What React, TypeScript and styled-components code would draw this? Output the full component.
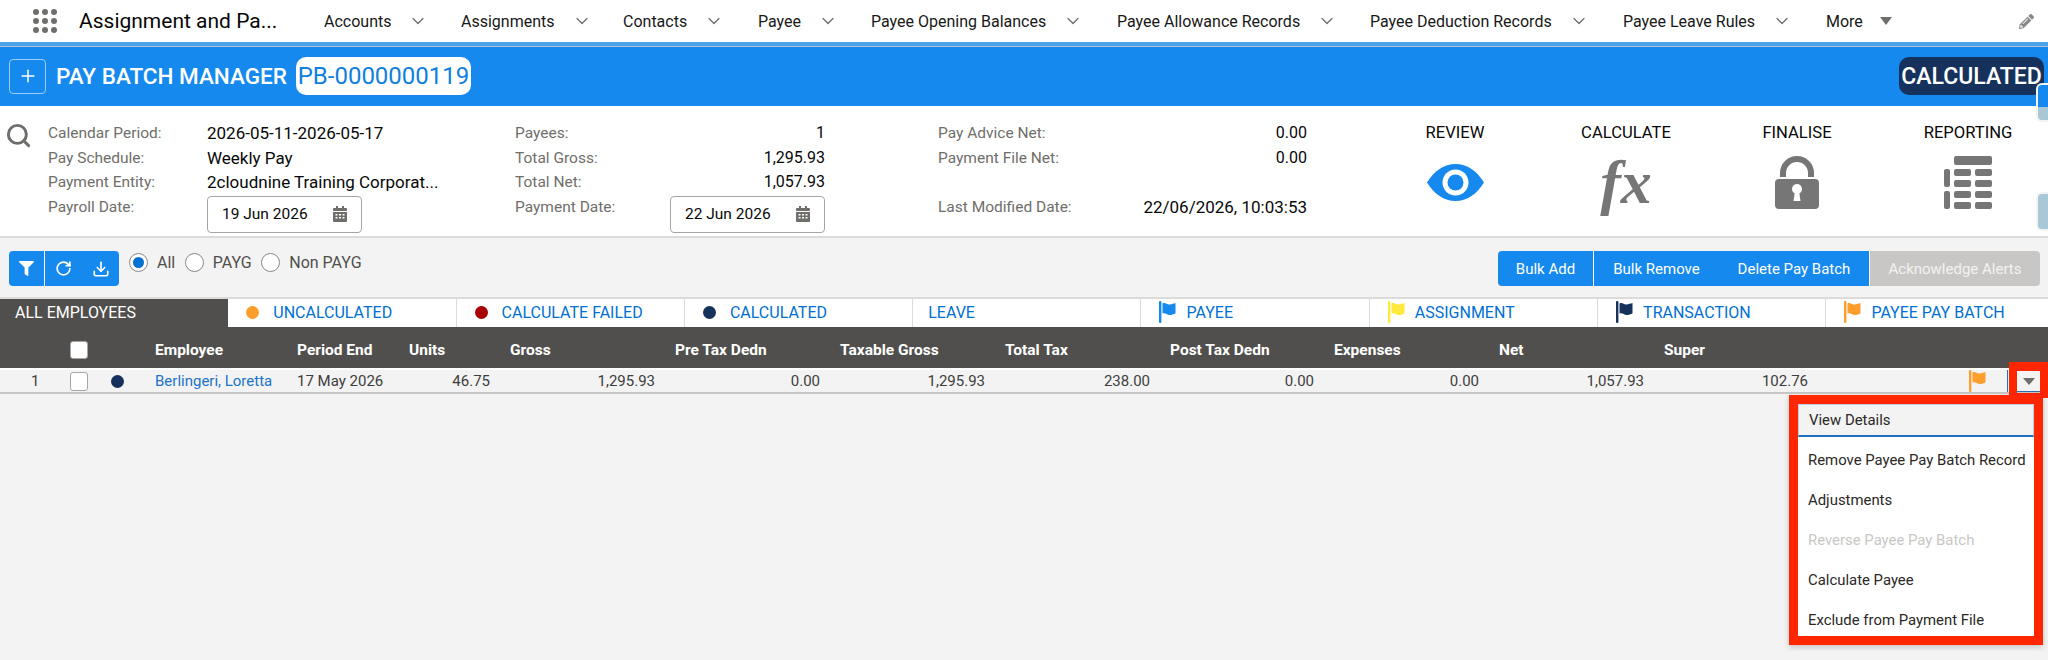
import styled, { createGlobalStyle } from "styled-components";
import { ChevronDown, Download, Plus, RotateCw, Search } from "lucide-react";
import { FaFilter, FaPencilAlt } from "react-icons/fa";

const GlobalStyle = createGlobalStyle`
  html, body {
    margin: 0;
    padding: 0;
    background: #f3f3f3;
  }
  * {
    box-sizing: border-box;
  }
`;

const Page = styled.div`
  position: relative;
  width: 2048px;
  height: 660px;
  overflow: hidden;
  background: #f3f3f3;
  font-family: Roboto, "Liberation Sans", sans-serif;
  color: #080707;
`;

const TopNav = styled.div`
  display: flex;
  align-items: center;
  height: 42px;
  padding-left: 33px;
  background: #fff;
`;

const AppGrid = styled.div`
  display: grid;
  grid-template-columns: repeat(3, 6px);
  gap: 3px;
  width: 46px;
`;

const AppDot = styled.span`
  width: 6px;
  height: 6px;
  border-radius: 50%;
  background: #706e6b;
`;

const AppName = styled.div`
  width: 245px;
  font-size: 21px;
  white-space: nowrap;
`;

const NavList = styled.div`
  display: grid;
  grid-template-columns: 137px 162px 135px 113px 246px 253px 253px 203px 193px auto;
  align-items: center;
`;

const NavItem = styled.div`
  display: flex;
  align-items: center;
  gap: 17px;
  font-size: 16px;
  color: #181818;
  white-space: nowrap;
`;

const MoreCaret = styled.span`
  width: 0;
  height: 0;
  border-left: 6px solid transparent;
  border-right: 6px solid transparent;
  border-top: 8px solid #706e6b;
`;

const AccentLine = styled.div`
  height: 5px;
  background: #4da3ea;
  border-bottom: 1px solid #b9c3cb;
`;

const Banner = styled.div`
  display: flex;
  align-items: center;
  height: 59px;
  padding: 0 4px 1px 9px;
  background: #1589ee;
  color: #fff;
`;

const AddButton = styled.div`
  display: flex;
  align-items: center;
  justify-content: center;
  width: 37px;
  height: 35px;
  border: 1px solid #9fcdf5;
  border-radius: 4px;
`;

const BannerTitle = styled.div`
  margin-left: 10px;
  font-size: 22.5px;
  font-weight: 500;
  white-space: nowrap;
`;

const BatchChip = styled.div`
  display: flex;
  align-items: center;
  justify-content: center;
  width: 175px;
  height: 38px;
  margin-left: 9px;
  border-radius: 10px;
  background: #fff;
  color: #0f7fe0;
  font-size: 24px;
`;

const StatusChip = styled.div`
  display: flex;
  align-items: center;
  justify-content: center;
  width: 145px;
  height: 38px;
  margin-left: auto;
  border-radius: 10px;
  background: #16325c;
  font-size: 23px;
  font-weight: 500;
`;

const Details = styled.div`
  display: grid;
  grid-template-columns: 48px 467px 423px 431.5px repeat(4, 171px);
  height: 132px;
  padding-top: 15px;
  background: #fff;
  border-bottom: 2px solid #dddbda;
`;

const SearchSlot = styled.div`
  padding: 1px 0 0 5px;
  color: #706e6b;
`;

const InfoGrid = styled.div<{ $label: number; $value: number; $right?: boolean }>`
  display: grid;
  grid-template-columns: ${(p) => p.$label}px ${(p) => p.$value}px;
  grid-auto-rows: 24.6px;
  align-items: center;
  font-size: 15.5px;
  line-height: 24px;

  & > *:nth-child(even) {
    text-align: ${(p) => (p.$right ? "right" : "left")};
  }
`;

const InfoLabel = styled.div`
  color: #706e6b;
  white-space: nowrap;
`;

const InfoValue = styled.div<{ $amount?: boolean }>`
  font-size: ${(p) => (p.$amount ? 16 : 17)}px;
  white-space: nowrap;
`;

const DateBox = styled.div`
  display: flex;
  align-items: center;
  justify-content: space-between;
  align-self: start;
  width: 155px;
  height: 37px;
  margin-top: 1px;
  padding: 0 14px;
  background: #fff;
  border: 1px solid #a8a6a4;
  border-radius: 4px;
  text-align: left;
`;

const ActionColumn = styled.div`
  display: flex;
  flex-direction: column;
  align-items: center;
  font-size: 16.6px;
  line-height: 24px;
`;

const ActionIcon = styled.div`
  display: flex;
  align-items: center;
  justify-content: center;
  height: 54px;
  margin-top: 10px;
`;

const FxGlyph = styled.span`
  font-family: "Liberation Serif", serif;
  font-style: italic;
  font-weight: 700;
  font-size: 62px;
  line-height: 54px;
  color: #767676;
`;

const Toolbar = styled.div`
  display: flex;
  justify-content: space-between;
  height: 59px;
  padding: 13px 8px 0 9px;
`;

const ToolbarLeft = styled.div`
  display: flex;
  align-items: flex-start;
`;

const IconGroup = styled.div`
  display: flex;
  align-items: center;
  width: 110px;
  height: 35px;
  border-radius: 4px;
  background: #1589ee;
  color: #fff;
`;

const IconCell = styled.div<{ $width: number; $divider?: boolean }>`
  display: flex;
  align-items: center;
  justify-content: center;
  width: ${(p) => p.$width}px;
  height: 100%;
  border-right: ${(p) => (p.$divider ? "1px solid #fff" : "none")};
`;

const RadioRow = styled.div`
  display: flex;
  align-items: center;
  gap: 9.5px;
  margin: 2px 0 0 10px;
  font-size: 16px;
  color: #514f4d;
`;

const RadioOption = styled.label`
  display: flex;
  align-items: center;
  gap: 9px;
`;

const RadioDot = styled.span<{ $on?: boolean }>`
  display: flex;
  align-items: center;
  justify-content: center;
  width: 19px;
  height: 19px;
  border: 1px solid #8a8886;
  border-radius: 50%;
  background: #fff;

  &::after {
    content: "";
    display: ${(p) => (p.$on ? "block" : "none")};
    width: 11px;
    height: 11px;
    border-radius: 50%;
    background: #0070d2;
  }
`;

const ActionGroup = styled.div`
  display: flex;
  height: 35px;
  border-radius: 4px;
  overflow: hidden;
  font-size: 15px;
`;

const GroupButton = styled.div<{ $width: number; $muted?: boolean; $divider?: boolean }>`
  display: flex;
  align-items: center;
  justify-content: center;
  width: ${(p) => p.$width}px;
  background: ${(p) => (p.$muted ? "#c9c7c5" : "#1589ee")};
  color: ${(p) => (p.$muted ? "#f3f2f2" : "#fff")};
  border-right: ${(p) => (p.$divider ? "1px solid #fff" : "none")};
  white-space: nowrap;
`;

const TabBar = styled.div`
  display: flex;
  height: 30px;
  border-top: 2px solid #dddbda;
  background: #fff;
`;

const Tab = styled.div<{ $active?: boolean }>`
  display: flex;
  flex: 0 0 228.3px;
  align-items: center;
  padding: 0 0 2px 15px;
  background: ${(p) => (p.$active ? "#514f4d" : "#fff")};
  color: ${(p) => (p.$active ? "#fff" : "#0070d2")};
  border-right: ${(p) => (p.$active ? "none" : "1px solid #dddbda")};
  font-size: 16px;
  white-space: nowrap;
`;

const TabIcon = styled.span`
  display: flex;
  justify-content: flex-start;
  width: 30px;
  padding-left: 3px;
`;

const StatusDot = styled.span<{ $color: string; $size: number; $indent?: number }>`
  display: block;
  width: ${(p) => p.$size}px;
  height: ${(p) => p.$size}px;
  margin-left: ${(p) => p.$indent ?? 0}px;
  border-radius: 50%;
  background: ${(p) => p.$color};
`;

const columns = "70px 26px 51px 142px 112px 101px 165px 165px 165px 165px 164px 165px 165px 164px 188px 40px";

const HeaderRow = styled.div`
  display: grid;
  grid-template-columns: ${columns};
  align-items: center;
  height: 41px;
  padding-top: 5px;
  background: #514f4d;
  color: #fff;
  font-size: 15.5px;
  font-weight: 700;
`;

const DataRow = styled.div`
  display: grid;
  grid-template-columns: ${columns};
  align-items: center;
  height: 26px;
  border-top: 2px solid #fff;
  border-bottom: 2px solid #c9c7c5;
  background: #f3f3f3;
  color: #3e3e3c;
  font-size: 15px;
`;

const HeaderCell = styled.div`
  padding-left: 8px;
  white-space: nowrap;
`;

const RowNumber = styled.div`
  padding-left: 31px;
`;

const Cell = styled.div<{ $align?: "left" | "right" }>`
  padding: 0 12px 0 8px;
  text-align: ${(p) => p.$align ?? "left"};
  white-space: nowrap;
`;

const NameLink = styled.span`
  color: #1b74c9;
`;

const Box = styled.span<{ $height: number }>`
  display: block;
  width: 18px;
  height: ${(p) => p.$height}px;
  border: 1px solid #a8a6a4;
  border-radius: 3px;
  background: #fff;
`;

const FlagCell = styled.div`
  display: flex;
  align-items: center;
  align-self: stretch;
  justify-content: flex-end;
  padding-right: 20px;
  border-right: 1px solid #2a6fb5;
`;

const RowToggle = styled.div`
  display: flex;
  align-items: center;
  justify-content: center;
  height: 22px;
  margin-left: 9px;
  width: 23px;
  background: #f3f3f3;
  border-top: 1px solid #2a6fb5;
  border-bottom: 1px solid #2a6fb5;

  &::after {
    content: "";
    border-left: 6px solid transparent;
    border-right: 6px solid transparent;
    border-top: 7px solid #706e6b;
  }
`;

const CalloutBox = styled.div`
  position: absolute;
  top: 362px;
  left: 2009px;
  width: 39px;
  height: 36px;
  border: solid #ff2600;
  border-width: 9px 8px 5px 8px;
  pointer-events: none;
`;

const RowMenu = styled.div`
  position: absolute;
  top: 395px;
  left: 1789px;
  width: 254px;
  height: 250px;
  overflow: hidden;
  background: #fff;
  border: 9px solid #ff2600;
  box-shadow: 0 2px 6px rgba(0, 0, 0, 0.2);
  font-size: 14.9px;
  color: #2b2826;
`;

const MenuItem = styled.div<{ $active?: boolean; $disabled?: boolean }>`
  display: flex;
  align-items: center;
  height: ${(p) => (p.$active ? 33 : 40)}px;
  margin-bottom: ${(p) => (p.$active ? 3 : 0)}px;
  padding-left: 10px;
  background: ${(p) => (p.$active ? "#f3f3f3" : "#fff")};
  border: ${(p) => (p.$active ? "1px solid #b9cfe4" : "none")};
  border-bottom: ${(p) => (p.$active ? "2px solid #1b6ec2" : "none")};
  color: ${(p) => (p.$disabled ? "#c9c7c5" : "inherit")};
  white-space: nowrap;
`;

const SideHandle = styled.div<{ $top: number; $split?: boolean }>`
  position: absolute;
  top: ${(p) => p.$top}px;
  right: 0;
  width: 12px;
  height: 39px;
  border: 2px solid #f3f3f3;
  border-right: none;
  border-radius: 6px 0 0 6px;
  background: ${(p) => (p.$split ? "linear-gradient(#1589ee 0 22px, #a8c8d6 22px)" : "#a8c8d6")};
`;

function Flag({ color }: { color: string }) {
  return (
    <svg width="18" height="22" viewBox="0 0 18 22">
      <rect x="0" y="0" width="2.4" height="22" rx="1" fill={color} />
      <path d="M3.5 2.5C6.5 1 8 4 10.5 3.5c2.500-.5 4-1 6-1.500v10.500c-2 .8-3.500 1.500-6 1.500-2.500 0-4-2.500-7-1.500z" fill={color} />
    </svg>
  );
}

function CalendarIcon() {
  return (
    <svg width="14" height="16" viewBox="0 0 14 16" fill="#706e6b">
      <rect x="3" y="0" width="2" height="3" />
      <rect x="9" y="0" width="2" height="3" />
      <rect x="0" y="2" width="14" height="3" rx="1" />
      <path d="M0 6h14v9a1 1 0 0 1-1 1H1a1 1 0 0 1-1-1z" />
      <path d="M2.500 8h2v1.500h-2zM6 8h2v1.500H6zM9.500 8h2v1.500h-2zM2.500 11h2v1.500h-2zM6 11h2v1.500H6zM9.500 11h2v1.500h-2z" fill="#fff" />
    </svg>
  );
}

function EyeIcon() {
  return (
    <svg width="57" height="37" viewBox="0 0 57 37">
      <path d="M0 18.500C7 7 17 0 28.500 0S50 7 57 18.500C50 30 40 37 28.500 37S7 30 0 18.500z" fill="#1589ee" />
      <circle cx="28.500" cy="18.500" r="13" fill="#fff" />
      <circle cx="28.500" cy="18.500" r="8" fill="#1589ee" />
    </svg>
  );
}

function LockIcon() {
  return (
    <svg width="44" height="53" viewBox="0 0 44 53">
      <path d="M8 21v-4a14 14 0 0 1 28 0v4" fill="none" stroke="#767676" strokeWidth="6" />
      <rect x="0" y="23" width="44" height="30" rx="4" fill="#767676" />
      <circle cx="22" cy="33" r="5" fill="#fff" />
      <path d="M20 35h4l1.500 10h-7z" fill="#fff" />
    </svg>
  );
}

function ReportIcon() {
  const left = [13, 35];
  const middle = [13, 24, 35, 46];
  return (
    <svg width="48" height="53" viewBox="0 0 48 53" fill="#767676">
      <rect x="10" y="0" width="38" height="9" rx="2" />
      {left.map((y) => (
        <rect key={y} x="0" y={y} width="6" height="18" rx="2" />
      ))}
      {middle.map((y) => (
        <rect key={y} x="10" y={y} width="17" height="7" rx="2" />
      ))}
      {middle.map((y) => (
        <rect key={y} x="31" y={y} width="17" height="7" rx="2" />
      ))}
    </svg>
  );
}

const navItems = [
  "Accounts",
  "Assignments",
  "Contacts",
  "Payee",
  "Payee Opening Balances",
  "Payee Allowance Records",
  "Payee Deduction Records",
  "Payee Leave Rules",
];

const tableHeaders = [
  "Employee",
  "Period End",
  "Units",
  "Gross",
  "Pre Tax Dedn",
  "Taxable Gross",
  "Total Tax",
  "Post Tax Dedn",
  "Expenses",
  "Net",
  "Super",
];

const rowAmounts = ["46.75", "1,295.93", "0.00", "1,295.93", "238.00", "0.00", "0.00", "1,057.93", "102.76"];

export default function App() {
  return (
    <Page>
      <GlobalStyle />
      <TopNav>
        <AppGrid>
          {Array.from({ length: 9 }, (_, i) => (
            <AppDot key={i} />
          ))}
        </AppGrid>
        <AppName>Assignment and Pa...</AppName>
        <NavList>
          {navItems.map((item) => (
            <NavItem key={item}>
              {item}
              <ChevronDown size={20} strokeWidth={1.5} color="#706e6b" />
            </NavItem>
          ))}
          <NavItem>
            More
            <MoreCaret />
          </NavItem>
          <FaPencilAlt size={15} color="#8a8886" />
        </NavList>
      </TopNav>
      <AccentLine />
      <Banner>
        <AddButton>
          <Plus size={20} strokeWidth={1.8} />
        </AddButton>
        <BannerTitle>PAY BATCH MANAGER</BannerTitle>
        <BatchChip>PB-0000000119</BatchChip>
        <StatusChip>CALCULATED</StatusChip>
      </Banner>
      <Details>
        <SearchSlot>
          <Search size={27} strokeWidth={2.6} />
        </SearchSlot>
        <InfoGrid $label={159} $value={300}>
          <InfoLabel>Calendar Period:</InfoLabel>
          <InfoValue>2026-05-11-2026-05-17</InfoValue>
          <InfoLabel>Pay Schedule:</InfoLabel>
          <InfoValue>Weekly Pay</InfoValue>
          <InfoLabel>Payment Entity:</InfoLabel>
          <InfoValue>2cloudnine Training Corporat...</InfoValue>
          <InfoLabel>Payroll Date:</InfoLabel>
          <DateBox>
            19 Jun 2026
            <CalendarIcon />
          </DateBox>
        </InfoGrid>
        <InfoGrid $label={155} $value={155} $right>
          <InfoLabel>Payees:</InfoLabel>
          <InfoValue $amount>1</InfoValue>
          <InfoLabel>Total Gross:</InfoLabel>
          <InfoValue $amount>1,295.93</InfoValue>
          <InfoLabel>Total Net:</InfoLabel>
          <InfoValue $amount>1,057.93</InfoValue>
          <InfoLabel>Payment Date:</InfoLabel>
          <DateBox>
            22 Jun 2026
            <CalendarIcon />
          </DateBox>
        </InfoGrid>
        <InfoGrid $label={204} $value={165} $right>
          <InfoLabel>Pay Advice Net:</InfoLabel>
          <InfoValue $amount>0.00</InfoValue>
          <InfoLabel>Payment File Net:</InfoLabel>
          <InfoValue $amount>0.00</InfoValue>
          <InfoLabel />
          <InfoValue />
          <InfoLabel>Last Modified Date:</InfoLabel>
          <InfoValue>22/06/2026, 10:03:53</InfoValue>
        </InfoGrid>
        <ActionColumn>
          REVIEW
          <ActionIcon>
            <EyeIcon />
          </ActionIcon>
        </ActionColumn>
        <ActionColumn>
          CALCULATE
          <ActionIcon>
            <FxGlyph>fx</FxGlyph>
          </ActionIcon>
        </ActionColumn>
        <ActionColumn>
          FINALISE
          <ActionIcon>
            <LockIcon />
          </ActionIcon>
        </ActionColumn>
        <ActionColumn>
          REPORTING
          <ActionIcon>
            <ReportIcon />
          </ActionIcon>
        </ActionColumn>
      </Details>
      <Toolbar>
        <ToolbarLeft>
          <IconGroup>
            <IconCell $width={36} $divider>
              <FaFilter size={15} />
            </IconCell>
            <IconCell $width={37}>
              <RotateCw size={17} strokeWidth={2.4} />
            </IconCell>
            <IconCell $width={37}>
              <Download size={18} strokeWidth={2.2} />
            </IconCell>
          </IconGroup>
          <RadioRow>
            <RadioOption>
              <RadioDot $on />
              All
            </RadioOption>
            <RadioOption>
              <RadioDot />
              PAYG
            </RadioOption>
            <RadioOption>
              <RadioDot />
              Non PAYG
            </RadioOption>
          </RadioRow>
        </ToolbarLeft>
        <ActionGroup>
          <GroupButton $width={96} $divider>
            Bulk Add
          </GroupButton>
          <GroupButton $width={125}>Bulk Remove</GroupButton>
          <GroupButton $width={151} $divider>
            Delete Pay Batch
          </GroupButton>
          <GroupButton $width={170} $muted>
            Acknowledge Alerts
          </GroupButton>
        </ActionGroup>
      </Toolbar>
      <TabBar>
        <Tab $active>ALL EMPLOYEES</Tab>
        <Tab>
          <TabIcon>
            <StatusDot $color="#ff9e2c" $size={13} />
          </TabIcon>
          UNCALCULATED
        </Tab>
        <Tab>
          <TabIcon>
            <StatusDot $color="#a80000" $size={13} />
          </TabIcon>
          CALCULATE FAILED
        </Tab>
        <Tab>
          <TabIcon>
            <StatusDot $color="#16325c" $size={13} />
          </TabIcon>
          CALCULATED
        </Tab>
        <Tab>LEAVE</Tab>
        <Tab>
          <TabIcon>
            <Flag color="#1589ee" />
          </TabIcon>
          PAYEE
        </Tab>
        <Tab>
          <TabIcon>
            <Flag color="#ffe93b" />
          </TabIcon>
          ASSIGNMENT
        </Tab>
        <Tab>
          <TabIcon>
            <Flag color="#16325c" />
          </TabIcon>
          TRANSACTION
        </Tab>
        <Tab>
          <TabIcon>
            <Flag color="#ff9e2c" />
          </TabIcon>
          PAYEE PAY BATCH
        </Tab>
      </TabBar>
      <HeaderRow>
        <div />
        <Box $height={18} />
        <div />
        {tableHeaders.map((label) => (
          <HeaderCell key={label}>{label}</HeaderCell>
        ))}
      </HeaderRow>
      <DataRow>
        <RowNumber>1</RowNumber>
        <Box $height={19} />
        <StatusDot $color="#16325c" $size={13} $indent={15} />
        <Cell>
          <NameLink>Berlingeri, Loretta</NameLink>
        </Cell>
        <Cell>17 May 2026</Cell>
        {rowAmounts.map((amount, i) => (
          <Cell key={i} $align="right">
            {amount}
          </Cell>
        ))}
        <FlagCell>
          <Flag color="#ff9e2c" />
        </FlagCell>
        <RowToggle />
      </DataRow>
      <CalloutBox />
      <RowMenu>
        <MenuItem $active>View Details</MenuItem>
        <MenuItem>Remove Payee Pay Batch Record</MenuItem>
        <MenuItem>Adjustments</MenuItem>
        <MenuItem $disabled>Reverse Payee Pay Batch</MenuItem>
        <MenuItem>Calculate Payee</MenuItem>
        <MenuItem>Exclude from Payment File</MenuItem>
      </RowMenu>
      <SideHandle $top={83} $split />
      <SideHandle $top={192} />
    </Page>
  );
}
